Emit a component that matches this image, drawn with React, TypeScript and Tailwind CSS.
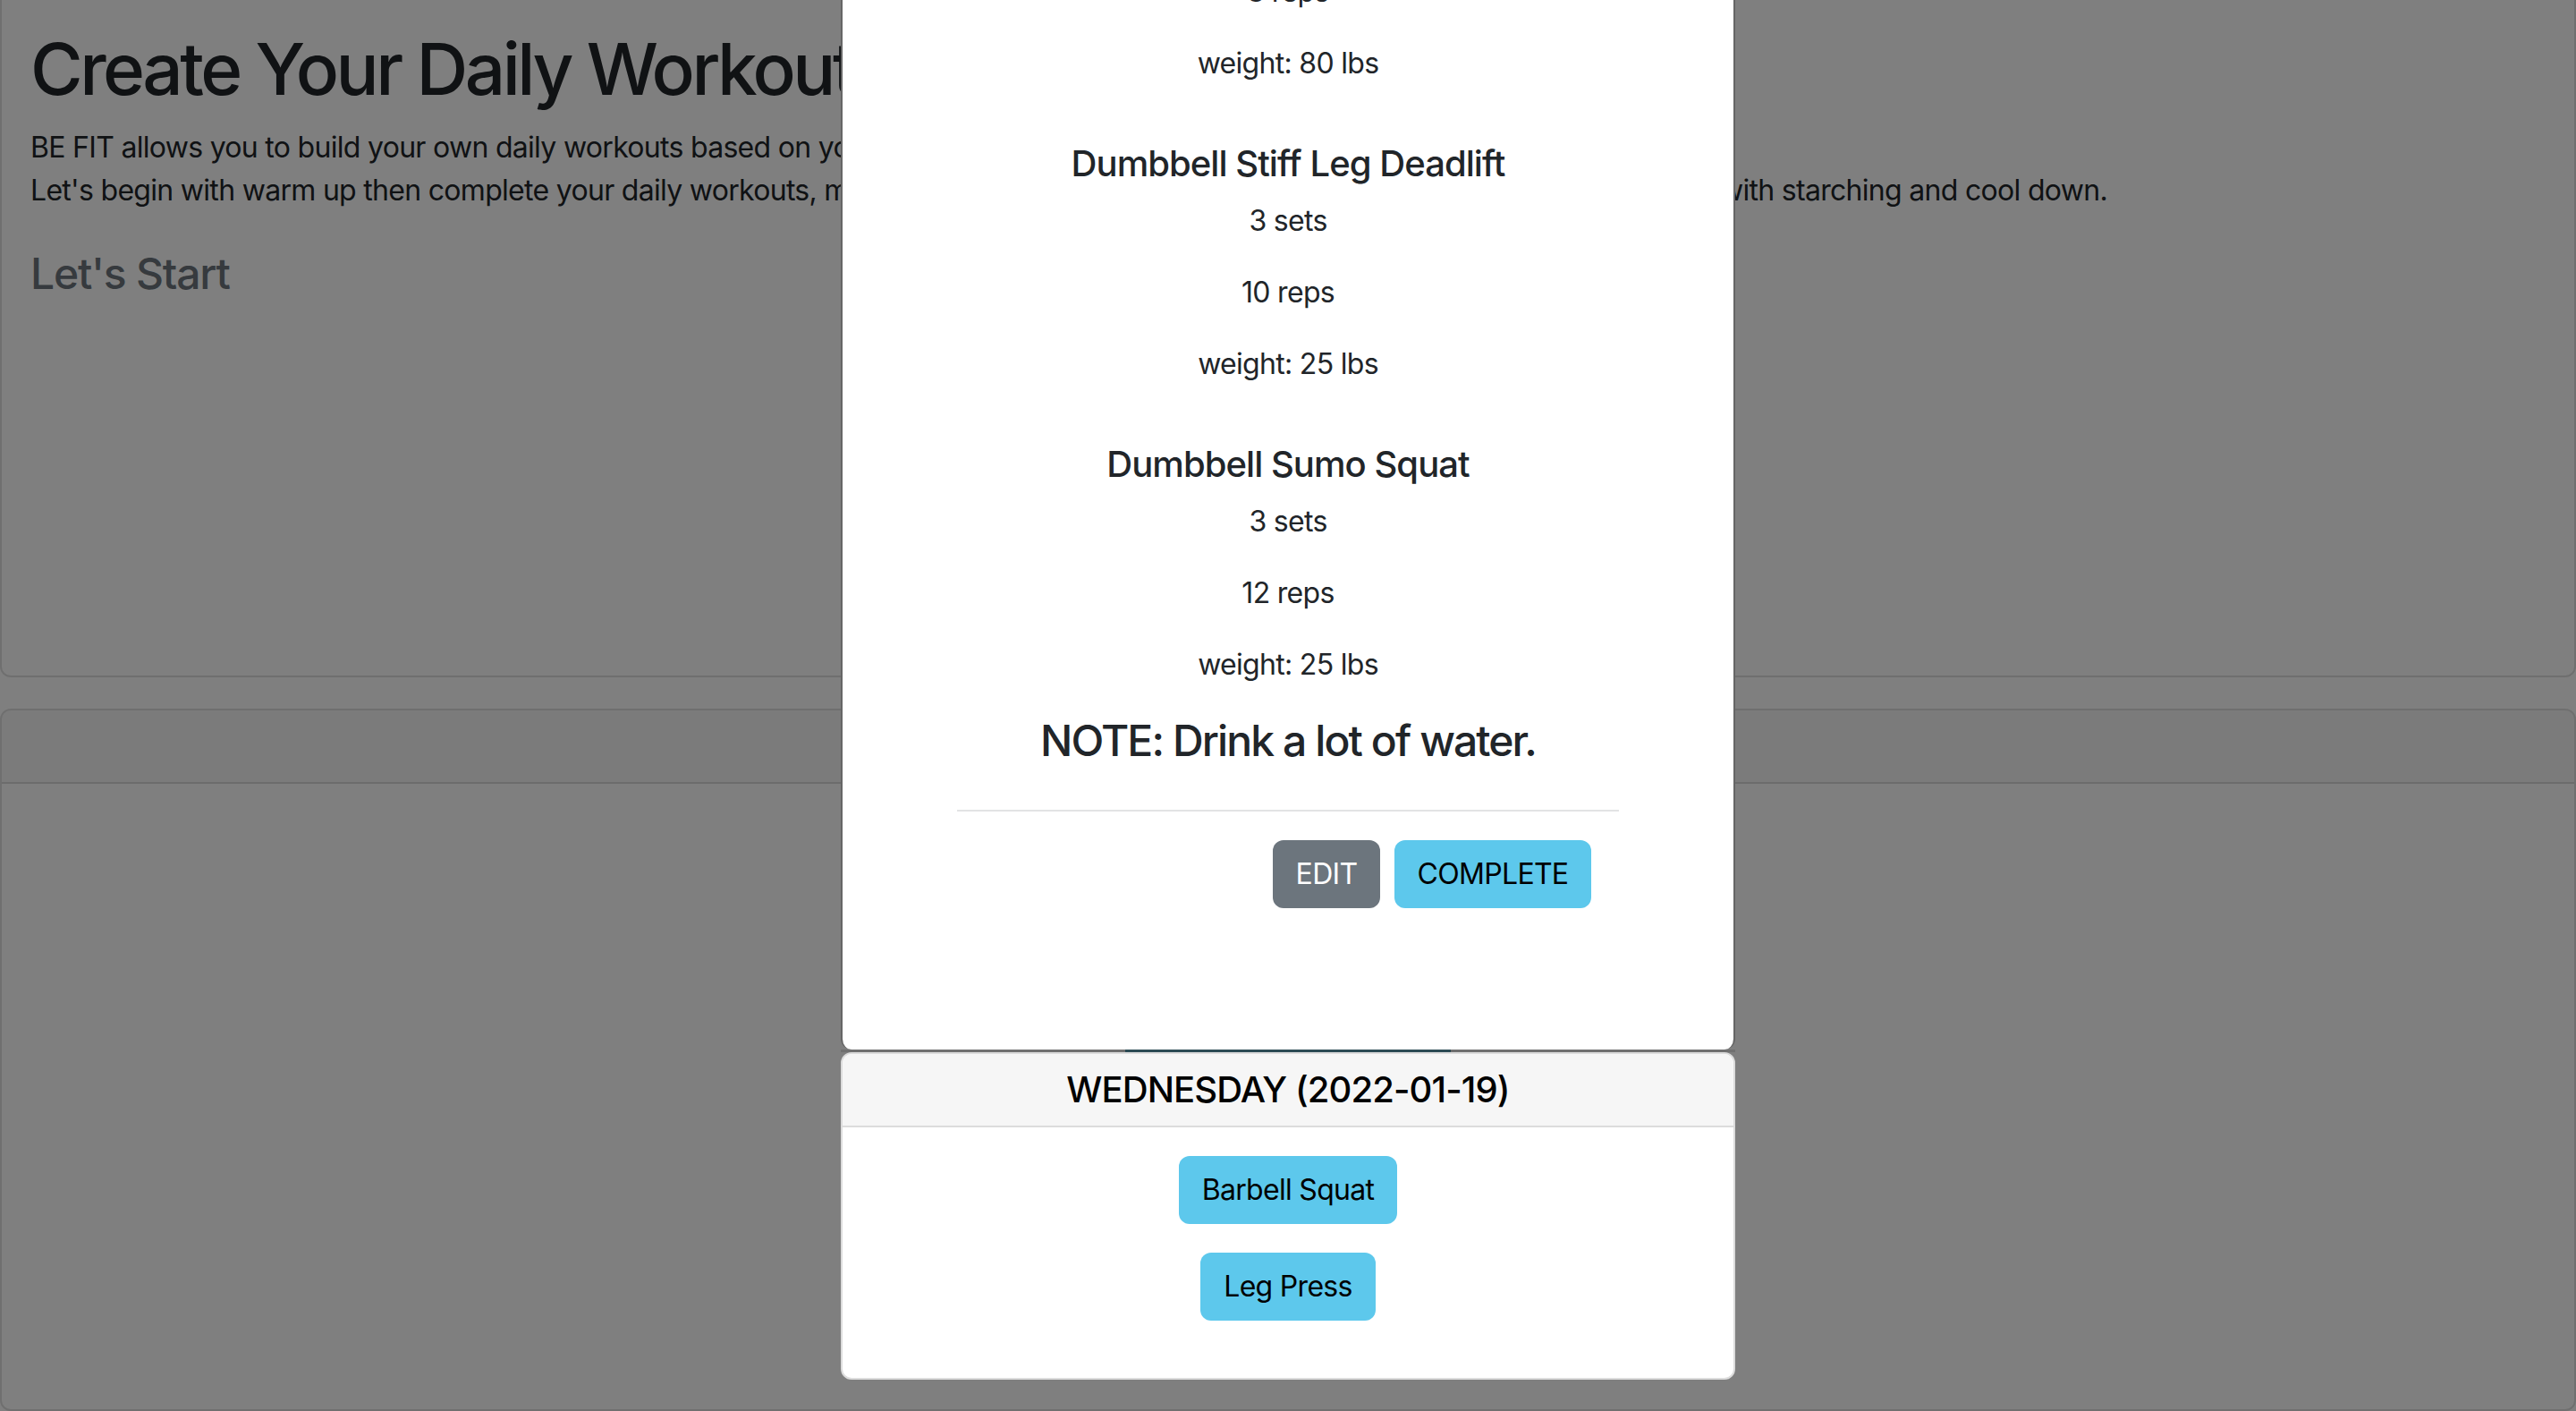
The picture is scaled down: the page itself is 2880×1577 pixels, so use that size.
import React from "react";

const font = "font-['Inter','Liberation_Sans',sans-serif]";

function ExerciseBlock({ name, sets, reps, weight }: { name: string; sets: string; reps: string; weight: string }) {
  return (
    <div className="pt-[32px]">
      <h5 className="text-[40px] leading-[1.2] font-medium tracking-[-0.95px] mb-[16px]">{name}</h5>
      <p className="text-[32px] leading-[1.5] mb-[32px]">{sets}</p>
      <p className="text-[32px] leading-[1.5] mb-[32px]">{reps}</p>
      <p className="text-[32px] leading-[1.5] mb-[32px]">{weight}</p>
    </div>
  );
}

function WorkoutModal() {
  return (
    <div className="bg-white border-x-2 border-[#666666] rounded-b-[12px]">
      <div className="flex flex-col text-center text-[#212529] tracking-[-0.7px] pb-[158px]">
        {/* first exercise, scrolled out of view */}
        <p className="text-[32px] leading-[1.5] mb-[32px]">8 reps</p>
        <p className="text-[32px] leading-[1.5] mb-[32px]">weight: 80 lbs</p>
        <ExerciseBlock name="Dumbbell Stiff Leg Deadlift" sets="3 sets" reps="10 reps" weight="weight: 25 lbs" />
        <ExerciseBlock name="Dumbbell Sumo Squat" sets="3 sets" reps="12 reps" weight="weight: 25 lbs" />
        <h4 className="text-[48px] leading-[1.2] font-medium tracking-[-1.9px] mb-[16px]">NOTE: Drink a lot of water.</h4>
        <div className="w-[740px] mx-auto flex flex-col">
          <hr className="border-0 h-[2px] bg-[#e2e3e4] my-[32px]" />
          <div className="flex justify-end gap-[16px] pr-[31px]">
            <button className="w-[120px] h-[76px] rounded-[12px] bg-[#6c757d] text-white text-[32px] uppercase">Edit</button>
            <button className="w-[220px] h-[76px] rounded-[12px] bg-[#5dc8ec] text-black text-[32px] uppercase">Complete</button>
          </div>
        </div>
      </div>
    </div>
  );
}

function DayCard() {
  return (
    <div className="bg-white border-2 border-[#dcdcdc] rounded-[12px] overflow-hidden">
      <div className="bg-[#f6f6f6] border-b-2 border-[#dcdcdc] py-[16px] text-center">
        <h5 className="text-[40px] leading-[1.2] font-medium tracking-[-0.9px] text-black">WEDNESDAY (2022-01-19)</h5>
      </div>
      <div className="flex flex-col items-center gap-[32px] pt-[32px] pb-[64px] tracking-[-0.7px]">
        <button className="w-[244px] h-[76px] rounded-[12px] bg-[#5dc8ec] text-black text-[32px]">Barbell Squat</button>
        <button className="w-[196px] h-[76px] rounded-[12px] bg-[#5dc8ec] text-black text-[32px]">Leg Press</button>
      </div>
    </div>
  );
}

export default function App() {
  return (
    <div className={`relative w-[2880px] h-[1577px] overflow-hidden bg-white ${font}`}>
      {/* page behind the modal */}
      <div className="h-[757px] border-x-2 border-b-2 border-black/[0.125] rounded-b-[12px] px-[32px] pt-[29px] text-[#212529]">
        <h1 className="text-[80px] leading-[1.2] font-medium tracking-[-3.5px] mb-[16px] whitespace-nowrap">Create Your Daily Workout</h1>
        <p className="text-[32px] leading-[1.5] tracking-[-0.7px] mb-[40px] whitespace-nowrap">
          BE FIT allows you to build your own daily workouts based on your fitness level.
          <br />
          Let's begin with warm up then complete your daily workouts, make sure you stay hydrated during your workout and finish them up with starching and cool down.
        </p>
        <h4 className="text-[48px] leading-[1.2] font-medium tracking-[-1.2px] text-[#6c757d]">Let's Start</h4>
      </div>
      <div className="mt-[35px] h-[785px] border-2 border-black/[0.125] rounded-[12px] overflow-hidden">
        <div className="bg-black/[0.03] border-b-2 border-black/[0.125] py-[16px] text-center">
          <h5 className="text-[40px] leading-[1.2] font-medium text-black">TUESDAY (2022-01-18)</h5>
        </div>
      </div>

      {/* backdrop */}
      <div className="absolute inset-0 bg-black/50" />

      {/* modal + day card */}
      <div className="absolute left-[940px] top-[-33px] w-[1000px] flex flex-col">
        <WorkoutModal />
        <div className="h-[3px] bg-[#707070] flex">
          <div className="ml-[318px] w-[364px] h-full bg-[#2c4b55]" />
        </div>
        <DayCard />
      </div>
    </div>
  );
}
